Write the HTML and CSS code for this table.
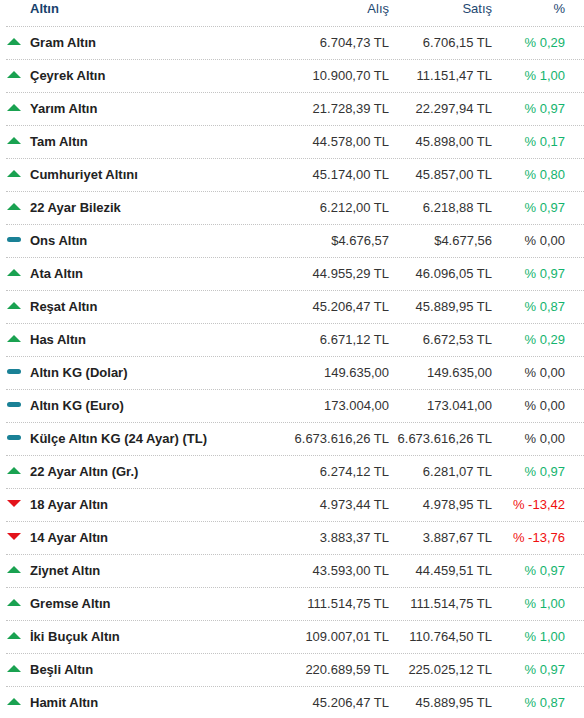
FILE: index.html
```html
<!DOCTYPE html>
<html lang="tr">
<head>
<meta charset="utf-8">
<title>Altın Fiyatları</title>
<link rel="stylesheet" href="styles.css">
</head>
<body>
<div class="table">
  <div class="row head">
    <div class="ic"></div>
    <div class="name">Altın</div>
    <div class="num">Alış</div>
    <div class="num">Satış</div>
    <div class="num">%</div>
  </div>
  <div class="row"><div class="ic"><span class="up"></span></div><div class="name">Gram Altın</div><div class="num">6.704,73 TL</div><div class="num">6.706,15 TL</div><div class="num pos">% 0,29</div></div>
  <div class="row"><div class="ic"><span class="up"></span></div><div class="name">Çeyrek Altın</div><div class="num">10.900,70 TL</div><div class="num">11.151,47 TL</div><div class="num pos">% 1,00</div></div>
  <div class="row"><div class="ic"><span class="up"></span></div><div class="name">Yarım Altın</div><div class="num">21.728,39 TL</div><div class="num">22.297,94 TL</div><div class="num pos">% 0,97</div></div>
  <div class="row"><div class="ic"><span class="up"></span></div><div class="name">Tam Altın</div><div class="num">44.578,00 TL</div><div class="num">45.898,00 TL</div><div class="num pos">% 0,17</div></div>
  <div class="row"><div class="ic"><span class="up"></span></div><div class="name">Cumhuriyet Altını</div><div class="num">45.174,00 TL</div><div class="num">45.857,00 TL</div><div class="num pos">% 0,80</div></div>
  <div class="row"><div class="ic"><span class="up"></span></div><div class="name">22 Ayar Bilezik</div><div class="num">6.212,00 TL</div><div class="num">6.218,88 TL</div><div class="num pos">% 0,97</div></div>
  <div class="row"><div class="ic"><span class="flat"></span></div><div class="name">Ons Altın</div><div class="num">$4.676,57</div><div class="num">$4.677,56</div><div class="num">% 0,00</div></div>
  <div class="row"><div class="ic"><span class="up"></span></div><div class="name">Ata Altın</div><div class="num">44.955,29 TL</div><div class="num">46.096,05 TL</div><div class="num pos">% 0,97</div></div>
  <div class="row"><div class="ic"><span class="up"></span></div><div class="name">Reşat Altın</div><div class="num">45.206,47 TL</div><div class="num">45.889,95 TL</div><div class="num pos">% 0,87</div></div>
  <div class="row"><div class="ic"><span class="up"></span></div><div class="name">Has Altın</div><div class="num">6.671,12 TL</div><div class="num">6.672,53 TL</div><div class="num pos">% 0,29</div></div>
  <div class="row"><div class="ic"><span class="flat"></span></div><div class="name">Altın KG (Dolar)</div><div class="num">149.635,00</div><div class="num">149.635,00</div><div class="num">% 0,00</div></div>
  <div class="row"><div class="ic"><span class="flat"></span></div><div class="name">Altın KG (Euro)</div><div class="num">173.004,00</div><div class="num">173.041,00</div><div class="num">% 0,00</div></div>
  <div class="row"><div class="ic"><span class="flat"></span></div><div class="name">Külçe Altın KG (24 Ayar) (TL)</div><div class="num">6.673.616,26 TL</div><div class="num">6.673.616,26 TL</div><div class="num">% 0,00</div></div>
  <div class="row"><div class="ic"><span class="up"></span></div><div class="name">22 Ayar Altın (Gr.)</div><div class="num">6.274,12 TL</div><div class="num">6.281,07 TL</div><div class="num pos">% 0,97</div></div>
  <div class="row"><div class="ic"><span class="down"></span></div><div class="name">18 Ayar Altın</div><div class="num">4.973,44 TL</div><div class="num">4.978,95 TL</div><div class="num neg">% -13,42</div></div>
  <div class="row"><div class="ic"><span class="down"></span></div><div class="name">14 Ayar Altın</div><div class="num">3.883,37 TL</div><div class="num">3.887,67 TL</div><div class="num neg">% -13,76</div></div>
  <div class="row"><div class="ic"><span class="up"></span></div><div class="name">Ziynet Altın</div><div class="num">43.593,00 TL</div><div class="num">44.459,51 TL</div><div class="num pos">% 0,97</div></div>
  <div class="row"><div class="ic"><span class="up"></span></div><div class="name">Gremse Altın</div><div class="num">111.514,75 TL</div><div class="num">111.514,75 TL</div><div class="num pos">% 1,00</div></div>
  <div class="row"><div class="ic"><span class="up"></span></div><div class="name">İki Buçuk Altın</div><div class="num">109.007,01 TL</div><div class="num">110.764,50 TL</div><div class="num pos">% 1,00</div></div>
  <div class="row"><div class="ic"><span class="up"></span></div><div class="name">Beşli Altın</div><div class="num">220.689,59 TL</div><div class="num">225.025,12 TL</div><div class="num pos">% 0,97</div></div>
  <div class="row"><div class="ic"><span class="up"></span></div><div class="name">Hamit Altın</div><div class="num">45.206,47 TL</div><div class="num">45.889,95 TL</div><div class="num pos">% 0,87</div></div>
</div>
</body>
</html>
```
FILE: styles.css
```css
html, body {
  margin: 0;
  padding: 0;
  background: #fff;
}
body {
  font-family: "Liberation Sans", Arial, sans-serif;
  font-size: 13px;
  color: #333;
  overflow: hidden;
}
.table {
  margin-left: 6px;
  width: 578px;
}
.row {
  display: grid;
  grid-template-columns: 24px 259px 100px 103px 73px;
  padding-right: 19px;
  height: 32px;
  line-height: 32px;
  border-bottom: 1px dotted #c4c4c4;
  white-space: nowrap;
}
.row.head {
  line-height: 15px;
  padding-top: 1px;
  box-sizing: border-box;
  height: 27px;
  color: #1d4770;
}
.head .name {
  font-weight: bold;
  color: #17416b;
}
.name {
  font-weight: bold;
  color: #222;
}
.num {
  text-align: right;
}
.pos {
  color: #14b46e;
}
.neg {
  color: #f01010;
}
.ic {
  display: flex;
  align-items: center;
  padding-left: 1px;
  padding-bottom: 3px;
}
.up {
  width: 0;
  height: 0;
  border-left: 7px solid transparent;
  border-right: 7px solid transparent;
  border-bottom: 7px solid #1aa251;
}
.down {
  width: 0;
  height: 0;
  border-left: 7px solid transparent;
  border-right: 7px solid transparent;
  border-top: 7px solid #e3131b;
}
.flat {
  width: 14px;
  height: 5px;
  border-radius: 3px;
  background: #1a8196;
}
```
